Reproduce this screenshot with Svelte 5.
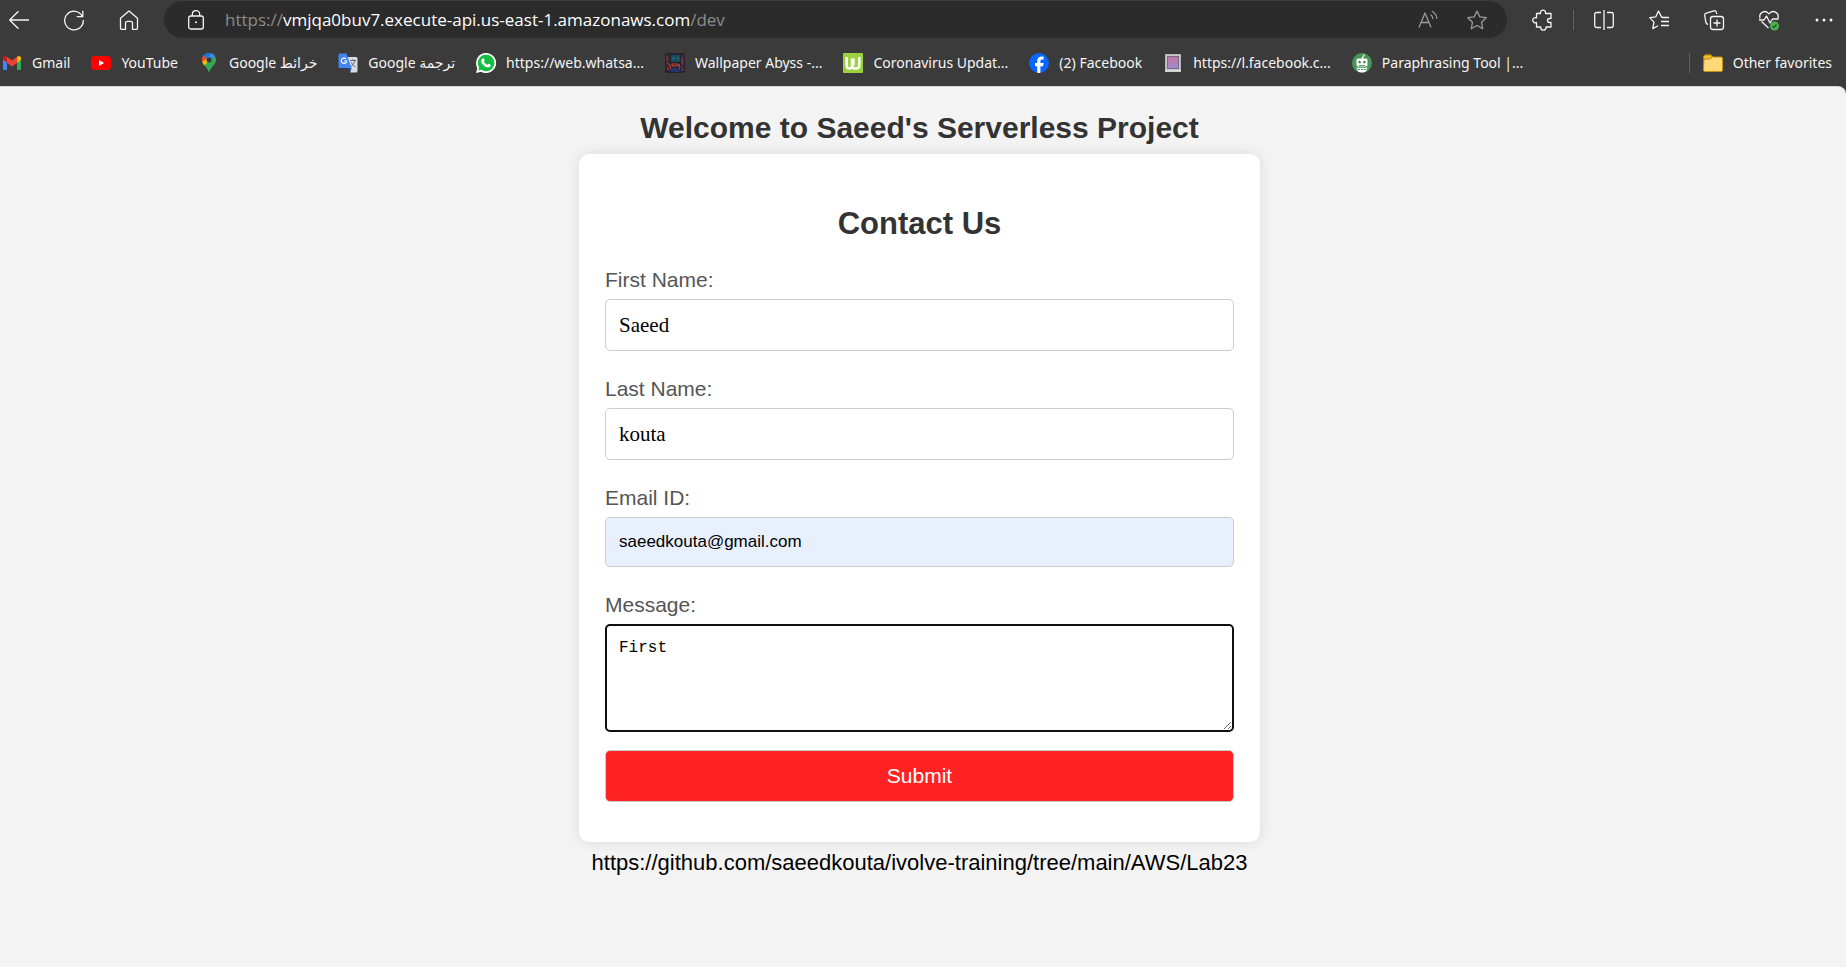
<script>
  const bookmarks = [
    { icon: 'gmail', label: 'Gmail' },
    { icon: 'youtube', label: 'YouTube' },
    { icon: 'maps', label: 'Google خرائط' },
    { icon: 'translate', label: 'Google ترجمة' },
    { icon: 'whatsapp', label: 'https://web.whatsa...' },
    { icon: 'wallpaper', label: 'Wallpaper Abyss -...' },
    { icon: 'worldometer', label: 'Coronavirus Updat...' },
    { icon: 'facebook', label: '(2) Facebook' },
    { icon: 'frame', label: 'https://l.facebook.c...' },
    { icon: 'robot', label: 'Paraphrasing Tool |...' }
  ];

  let firstName = $state('Saeed');
  let lastName = $state('kouta');
  let email = $state('saeedkouta@gmail.com');
  let message = $state('First');
</script>

{#snippet favicon(name)}
  <svg class="favicon" viewBox="0 0 20 20" aria-hidden="true">
    {#if name === 'gmail'}
      <path d="M1 5.500v10.200c0 .8.5 1.300 1.300 1.300H5V9z" fill="#4285f4" />
      <path d="M19 5.500v10.200c0 .8-.5 1.300-1.300 1.300H15V9z" fill="#34a853" />
      <path d="M15 5v4.800l4-3V5.200c0-2-2.200-3-3.700-1.800z" fill="#fbbc04" />
      <path d="M1 5.200v1.600l4 3V5l-.3-1.600C3.200 2.200 1 3.200 1 5.200z" fill="#c5221f" />
      <path d="M5 9.800V3.700l5 3.800 5-3.800v6.100l-5 3.800z" fill="#ea4335" />
    {:else if name === 'youtube'}
      <rect x="0" y="3" width="20" height="14" rx="3.500" fill="#f00" />
      <path d="M8 7l5.200 3L8 13z" fill="#fff" />
    {:else if name === 'maps'}
      <path d="M10 0C6.100 0 3 3.100 3 7c0 5 5.500 6.500 7 13 1.500-6.500 7-8 7-13 0-3.900-3.100-7-7-7z" fill="#34a853" />
      <path d="M3 7c0 2.300 1.200 4 2.600 5.600L12 5 7 2 3.500 4.500z" fill="#fbbc04" />
      <path d="M4.600 2.500A7 7 0 0 0 3 7c0 .7.1 1.300.3 1.900l4.600-4z" fill="#ea4335" />
      <path d="M10 0C7.800 0 5.900 1 4.600 2.500L8 5.300l4.500-4.900A7 7 0 0 0 10 0z" fill="#1a73e8" />
      <path d="M12.500.4 8 5.300 10 9l5.800-6A7 7 0 0 0 12.500.4z" fill="#4285f4" />
      <circle cx="10" cy="6.800" r="2.600" fill="#303848" />
    {:else if name === 'translate'}
      <path d="M9 4h9a1.500 1.500 0 0 1 1.500 1.500V18a1.500 1.500 0 0 1-1.500 1.500h-5.500z" fill="#dadce0" />
      <path d="M12 7.500h6M15 6v1.500M17 7.500c-.5 3-2.500 5-4.500 6M13.500 9.500c.8 2 2 3.500 4 4.500" fill="none" stroke="#60717c" />
      <path d="M2 .5h6.500L13.500 15H2A1.500 1.500 0 0 1 .5 13.500V2A1.500 1.500 0 0 1 2 .5z" fill="#4285f4" />
      <path d="M10 15h3.500l-1.200 4z" fill="#1a4fba" />
      <path d="M8 5.900A2.700 2.700 0 1 0 8.700 8H6.300" fill="none" stroke="#fff" stroke-width="1.200" />
    {:else if name === 'whatsapp'}
      <path d="M10 0a10 10 0 0 0-8.700 14.900L0 20l5.200-1.300A10 10 0 1 0 10 0z" fill="#fff" />
      <path d="M10 1.800a8.200 8.200 0 0 0-6.900 12.600l-.8 3.200 3.300-.8A8.200 8.200 0 1 0 10 1.800z" fill="#12bd42" />
      <path d="M6.600 5.400c.5-.4 1-.3 1.300.2l.8 1.700c.1.400-.8 1.200-.7 1.400.7 1.400 1.800 2.500 3.300 3.100.3.100 1-1.100 1.400-1l1.800.9c.5.300.2 1.500-.3 2-2 1.700-5 .3-7-1.800-2-2-3-4.800-.6-6.500z" fill="#fff" />
    {:else if name === 'wallpaper'}
      <rect width="20" height="20" rx="2" fill="#27202f" />
      <rect x="1" y="1" width="4" height="16" fill="#3c2338" />
      <rect x="16" y="2" width="3" height="14" fill="#4a2930" />
      <rect x="6" y="2" width="9" height="7" rx="1" fill="#164c59" />
      <path d="M7.500 4.500h2v2h-2zM12 4.500h1.500v2H12z" fill="#2b7883" />
      <path d="M2 10l3 2 1 5M14 11l1 4-2 2M7 11h6v2H7z" fill="none" stroke="#cf453d" />
      <path d="M2 3v5M17 5v6M3 14v4M16 17h3" stroke="#8a4637" />
      <path d="M6 15h8l1 4H5z" fill="#253369" />
    {:else if name === 'worldometer'}
      <rect width="20" height="20" rx="1" fill="#9bd13f" />
      <path d="M3.700 4v8.500c0 4.200 5.300 4.200 5.300 0V5.500M9 12.500c0 4.200 7.300 4.200 7.300 0V4M10.500 5.500v7" fill="none" stroke="#fff" stroke-width="2.400" />
    {:else if name === 'facebook'}
      <circle cx="10" cy="10" r="10" fill="#0866ff" />
      <path d="M8.200 19.800v-6.600H6V10h2.200V8.500c0-3.500 1.600-5 4.800-5 .6 0 1.300.1 1.700.2v2.800h-1.400c-1.500 0-1.900.6-1.900 1.900V10h3.200l-.5 3.200h-2.700v6.600a10 10 0 0 1-3.200 0z" fill="#fff" />
    {:else if name === 'frame'}
      <defs>
        <linearGradient id="dusk" x2="0" y2="1"><stop stop-color="#c4779c" /><stop offset="1" stop-color="#9d8dce" /></linearGradient>
      </defs>
      <rect x="2.500" y="1.500" width="15" height="17" fill="#c9c9c9" stroke="#b5b5b5" />
      <rect x="4.500" y="3.500" width="11" height="12" fill="url(#dusk)" stroke="#75688a" />
      <path d="M2 18h16" stroke="#eee" />
    {:else if name === 'robot'}
      <circle cx="10" cy="10" r="10" fill="#499557" />
      <path d="M10 6l2.200-4.500" stroke="#fff" stroke-width="1.300" />
      <rect x="4.500" y="5.500" width="11" height="8" rx="1.500" fill="#fff" />
      <path d="M6.500 8h2.200v2.200H6.500zM11.300 8h2.200v2.200h-2.200zM7 12h6v.8H7z" fill="#3d7d49" />
      <path d="M4.500 14.800h11l-1.500 3.800a9 9 0 0 1-8 0z" fill="#fff" />
      <path d="M6 16.500h8" stroke="#499557" stroke-dasharray="2 1" />
    {:else if name === 'folder'}
      <path d="M1 4c0-1 .5-2 1.500-2H8l1.500 2H18c.9 0 1.500.6 1.500 1.500V17c0 .8-.5 1.500-1.500 1.500H2c-.8 0-1.500-.6-1.500-1.500z" fill="#ffd978" stroke="#c38e0c" />
      <path d="M.5 6V4c0-1 .6-2 2-2H8l1 1.500L7.500 6z" fill="#f5bd2b" stroke="#b9850b" />
    {/if}
  </svg>
{/snippet}

<div class="browser">
  <header>
    <div class="toolbar">
      <nav class="controls" aria-label="Navigation">
        <button aria-label="Back"><svg viewBox="0 0 20 20"><path d="M20 10H.7M9.500 1.200.7 10l8.800 8.800" /></svg></button>
        <button aria-label="Refresh"><svg viewBox="0 0 20 20"><path d="M18.400 6.500A9.300 9.300 0 1 0 19.300 10M18.800.7v6h-6" /></svg></button>
        <button aria-label="Home"><svg viewBox="0 0 20 20"><path d="M1.500 8.300 10 .9l8.500 7.400v10c0 .6-.4 1-1 1h-4v-6c0-1.200-.8-2-2-2h-3c-1.200 0-2 .8-2 2v6h-4c-.6 0-1-.4-1-1z" /></svg></button>
      </nav>
      <div class="address">
        <button aria-label="Site information"><svg viewBox="0 0 20 20"><rect x="2.700" y="6" width="14.600" height="13" rx="2" /><path d="M6.300 6V4.300C6.300 2 7.800.7 10 .7s3.700 1.300 3.700 3.600V6" /><circle cx="10" cy="12.300" r="1" class="dot" /></svg></button>
        <span class="url">https://<b>vmjqa0buv7.execute-api.us-east-1.amazonaws.com</b>/dev</span>
        <div class="actions">
          <button aria-label="Read aloud"><svg viewBox="0 0 20 20"><path d="M1 17.500 7 3l6 14.500M3.300 12.500h7.400M12.500 4.500c1.500 1 2.300 2.500 2.500 4.500M13.800 1c3 1.800 4.900 4.500 5.200 8" /></svg></button>
          <button aria-label="Add to favorites"><svg viewBox="0 0 20 20"><path d="m10 1 2.800 5.900 6.400.8-4.700 4.500 1.200 6.500L10 15.500l-5.700 3.200 1.200-6.500L.8 7.700l6.400-.8z" /></svg></button>
        </div>
      </div>
      <div class="tools">
        <button aria-label="Extensions"><svg viewBox="0 0 20 20"><path d="M3.500 3.500h4a2.600 2.600 0 1 1 5 0h5.500v5h-1.500a2 2 0 0 0 0 4H18v4.500h-5a2.700 2.700 0 1 1-5.300 0H3.500v-4.500a2.600 2.600 0 1 1 0-4.600z" /></svg></button>
        <span class="rule"></span>
        <button aria-label="Split screen"><svg viewBox="0 0 20 20"><path d="M7 2.500H2.500c-1 0-1.800.7-1.800 1.700v11.600c0 1 .8 1.700 1.800 1.700H7M13 2.500h4.500c1 0 1.800.7 1.800 1.700v11.600c0 1-.8 1.700-1.800 1.700H13M10 0v20" /></svg></button>
        <button aria-label="Favorites"><svg viewBox="0 0 20 20"><path d="M14.500 7.500 12.500 7 9.500 1 6.800 6.800l-6 .8 4.200 4.500-1.200 6.500L9 15.700M13 7.500h7M12 11.500h8M12 15.500h8" /></svg></button>
        <button aria-label="Collections"><svg viewBox="0 0 20 20"><rect x="6.500" y="6.500" width="13" height="13" rx="2.500" /><path d="M13 9.500v7M9.500 13h7M4 14.500C2.500 14 2 13 1.800 12L.7 5.500c-.2-1.200.4-2 1.500-2.300L10 .8c1.200-.3 2 .2 2.300 1.400l.5 1.800" /></svg></button>
        <button aria-label="Browser essentials"><svg viewBox="0 0 20 20"><path d="M1 8.500C-.5 2.500 6.500-1 10 4c3.500-5 10.500-1.500 9 4.500M2.500 11.500 9.500 18M0 10h5l2.500-4 3.500 7 2.500-4h6" /><circle cx="15.500" cy="16" r="4.500" class="badge" /><path d="m13.500 16 1.500 1.500 2.500-3" class="tick" /></svg></button>
        <button aria-label="Settings and more"><svg viewBox="0 0 20 20"><g class="dot"><circle cx="3" cy="10" r="1.500" /><circle cx="10" cy="10" r="1.500" /><circle cx="17" cy="10" r="1.500" /></g></svg></button>
      </div>
    </div>

    <nav class="bookmarks" aria-label="Favorites bar">
      {#each bookmarks as item (item.icon)}
        <a href="#{item.icon}">{@render favicon(item.icon)}<span>{item.label}</span></a>
      {/each}
      <span class="rule end"></span>
      <a href="#other">{@render favicon('folder')}<span>Other favorites</span></a>
    </nav>
  </header>

  <main>
    <h1>Welcome to Saeed's Serverless Project</h1>
    <form onsubmit={(event) => event.preventDefault()}>
      <h2>Contact Us</h2>
      <label for="first">First Name:</label>
      <input id="first" type="text" bind:value={firstName} />
      <label for="last">Last Name:</label>
      <input id="last" type="text" bind:value={lastName} />
      <label for="email">Email ID:</label>
      <input id="email" class="filled" type="email" bind:value={email} />
      <label for="message">Message:</label>
      <textarea id="message" spellcheck="false" bind:value={message}></textarea>
      <button class="submit" type="submit">Submit</button>
    </form>
    <p>https://github.com/saeedkouta/ivolve-training/tree/main/AWS/Lab23</p>
  </main>
</div>

<style>
  :global(body) {
    margin: 0;
    background: #3b3b3b;
  }

  .browser {
    min-height: 100vh;
    display: flex;
    flex-direction: column;
    font-family: 'Liberation Sans', Arial, sans-serif;
  }

  header {
    background: #3b3b3b;
    color: #f5f5f5;
    font-family: 'Noto Sans', 'DejaVu Sans', sans-serif;
  }

  header button {
    display: flex;
    padding: 0;
    border: 0;
    background: none;
    color: inherit;
  }

  header button svg {
    width: 20px;
    height: 20px;
    fill: none;
    stroke: currentColor;
    stroke-width: 1.3;
    stroke-linejoin: round;
    overflow: visible;
  }

  svg .dot {
    fill: currentColor;
    stroke: none;
  }

  svg .badge {
    fill: #4caf50;
    stroke: none;
  }

  svg .tick {
    stroke: #24572a;
  }

  .toolbar {
    display: flex;
    align-items: center;
    padding: 1px 12px 0 9px;
  }

  .controls {
    display: flex;
    gap: 35px;
    padding-right: 25px;
  }

  .address {
    flex: 1;
    min-width: 0;
    height: 37px;
    display: flex;
    align-items: center;
    gap: 19px;
    padding: 0 20px 0 22px;
    border-radius: 19px;
    background: #2b2b2b;
  }

  .url {
    flex: 1;
    overflow: hidden;
    white-space: nowrap;
    color: #8c8c8c;
    font-family: 'Open Sans', 'Noto Sans', sans-serif;
    font-size: 17px;
    line-height: 24px;
  }

  .url b {
    color: #fff;
    font-weight: 400;
  }

  .actions {
    display: flex;
    gap: 29px;
    color: #9a9a9a;
  }

  .tools {
    display: flex;
    align-items: center;
    gap: 35px;
    padding-left: 26px;
  }

  .rule {
    width: 1px;
    height: 20px;
    background: #626262;
  }

  .tools .rule {
    margin: 0 -15px;
  }

  .bookmarks {
    display: flex;
    align-items: center;
    gap: 21px;
    height: 46px;
    padding: 2px 14px 0 2px;
  }

  .bookmarks a {
    display: flex;
    align-items: center;
    gap: 10px;
    color: inherit;
    text-decoration: none;
    white-space: nowrap;
    font-size: 14px;
    line-height: 20px;
  }

  .favicon {
    width: 20px;
    height: 20px;
    flex: none;
  }

  .end {
    margin-left: auto;
    margin-right: -8px;
  }

  main {
    flex: 1;
    display: flex;
    flex-direction: column;
    align-items: center;
    padding: 23px 7px 23px 0;
    border-top: 1px solid #d4d4d4;
    border-top-right-radius: 8px;
    background: #f3f3f3;
  }

  h1,
  h2 {
    margin: 0;
    color: #333;
    font-size: 31px;
    line-height: 36px;
    text-align: center;
  }

  h1 {
    margin-bottom: 8px;
    font-size: 30px;
  }

  form {
    box-sizing: border-box;
    width: 100%;
    max-width: 681px;
    display: flex;
    flex-direction: column;
    padding: 52px 26px 40px;
    border-radius: 10px;
    background: #fff;
    box-shadow: 0 0 13px rgba(0, 0, 0, 0.1);
  }

  h2 {
    margin-bottom: 26px;
  }

  label {
    margin-bottom: 7px;
    color: #555;
    font-size: 21px;
    line-height: 24px;
  }

  input,
  textarea,
  .submit {
    box-sizing: border-box;
    width: 100%;
    border: 1px solid #ccc;
    border-radius: 5px;
    color: #000;
  }

  input {
    height: 52px;
    margin-bottom: 26px;
    padding: 0 13px;
    background: #fff;
    font-family: 'Liberation Serif', 'Times New Roman', serif;
    font-size: 21px;
  }

  .filled {
    height: 50px;
    background: #e8f0fe;
    font-family: 'Liberation Sans', Arial, sans-serif;
    font-size: 17px;
  }

  textarea {
    height: 108px;
    margin-bottom: 18px;
    padding: 12px;
    border: 2px solid #101010;
    font-family: 'Liberation Mono', monospace;
    font-size: 16px;
    line-height: 20px;
    outline: 0;
  }

  .submit {
    height: 52px;
    background: #f22;
    color: #fff;
    font-family: inherit;
    font-size: 21px;
  }

  p {
    margin: 7px 0 0;
    color: #000;
    font-size: 22px;
    line-height: 28px;
  }
</style>
